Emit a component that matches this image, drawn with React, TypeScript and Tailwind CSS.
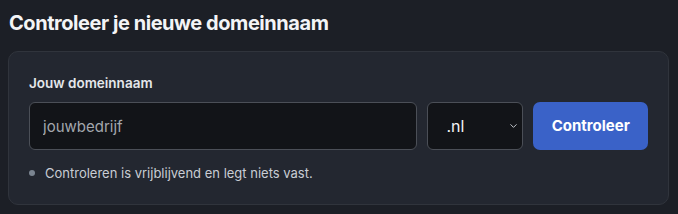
import { ChevronDown } from 'lucide-react'

export default function App() {
  return (
    <div className="min-h-screen w-full bg-[#1c1f26] px-2 pt-[9px] font-['Inter',sans-serif] text-white">
      <h1 className="pl-[1px] text-[20px] font-bold leading-[28px] tracking-[-0.45px] text-[#f3f4f6]">
        Controleer je nieuwe domeinnaam
      </h1>

      <div className="mt-[14px] w-[661px] rounded-[10px] border border-[#30343c] bg-[#232730] px-5 pt-[22px] pb-[22px]">
        <label className="block text-[13.5px] font-semibold leading-[18px] text-[#e5e7eb]">
          Jouw domeinnaam
        </label>

        <div className="mt-[10px] flex items-center">
          <input
            type="text"
            placeholder="jouwbedrijf"
            className="h-[48px] w-[390px] rounded-[6px] border border-[#4b4f57] bg-[#121418] px-[13px] text-[15px] text-white placeholder:text-[#a3a7ae] outline-none"
          />
          <div className="relative ml-[10px]">
            <select className="h-[48px] w-[96px] appearance-none rounded-[6px] border border-[#4b4f57] bg-[#121418] pl-[18px] text-[16px] text-[#f3f4f6] outline-none">
              <option>.nl</option>
              <option>.com</option>
              <option>.eu</option>
            </select>
            <ChevronDown
              size={11}
              strokeWidth={2}
              className="pointer-events-none absolute right-[4px] top-1/2 -translate-y-1/2 text-[#d1d5db]"
            />
          </div>
          <button className="ml-[10px] h-[48px] w-[115px] rounded-[7px] bg-[#3a62c8] text-[15px] font-bold text-white">
            Controleer
          </button>
        </div>

        <div className="mt-[14px] flex items-center gap-[10px]">
          <span className="h-[6px] w-[6px] rounded-full bg-[#7b8591]" />
          <p className="text-[13px] leading-[18px] text-[#c9cdd4]">
            Controleren is vrijblijvend en legt niets vast.
          </p>
        </div>
      </div>
    </div>
  )
}
